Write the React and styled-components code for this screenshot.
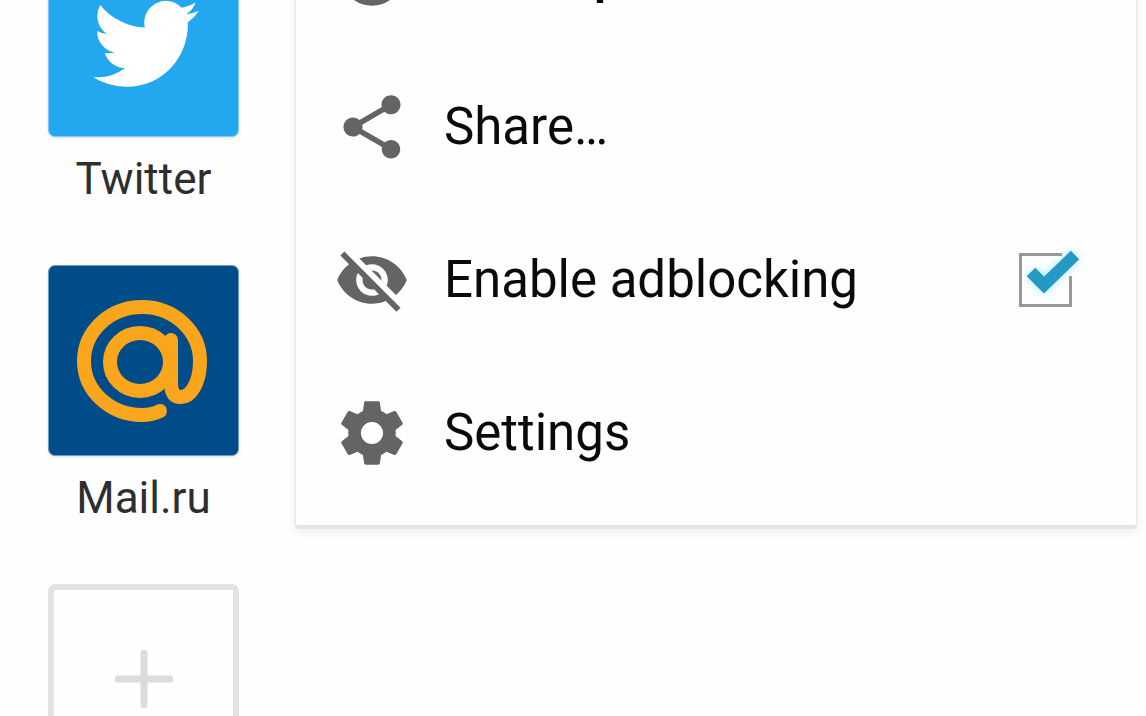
import React, { useState } from "react";
import styled, { createGlobalStyle } from "styled-components";

const GlobalStyle = createGlobalStyle`
  * {
    box-sizing: border-box;
  }

  body {
    margin: 0;
    background: #fefefe;
    font-family: Roboto, "Liberation Sans", sans-serif;
  }
`;

const Page = styled.div`
  position: relative;
  height: 100vh;
  overflow: hidden;
`;

// the list is scrolled, so its first tile starts above the window
const SpeedDial = styled.nav`
  display: flex;
  flex-direction: column;
  gap: 20px;
  width: 191px;
  margin: -54px 0 0 48px;
`;

const Dial = styled.a`
  display: flex;
  flex-direction: column;
  flex-shrink: 0;
  height: 299px;
  color: #2e2e2e;
  font-size: 44px;
  line-height: 54px;
  text-align: center;
  text-decoration: none;
`;

const Tile = styled.span`
  display: block;
  height: 191px;
  margin-bottom: 15px;
  border: 1px solid ${(props) => props.$edge};
  border-radius: 7px;
  background: ${(props) => props.$color};
  box-shadow: 0 1px 3px rgba(0, 0, 0, 0.12);

  svg {
    display: block;
  }
`;

const AddTile = styled.button`
  display: flex;
  align-items: center;
  justify-content: center;
  flex-shrink: 0;
  width: 191px;
  height: 189px;
  padding: 0;
  border: 6px solid #e2e2e2;
  border-radius: 7px;
  background: #fefefe;
  cursor: pointer;
`;

const Menu = styled.div`
  position: absolute;
  top: -105px;
  left: 294px;
  right: 8px;
  padding-bottom: 16px;
  border: 2px solid #ececec;
  border-bottom: 4px solid #e4e4e4;
  border-radius: 6px;
  background: #fefefe;
  box-shadow: 0 4px 10px rgba(0, 0, 0, 0.06);
`;

const itemStyles = `
  display: flex;
  align-items: center;
  gap: 34px;
  width: 100%;
  height: 153px;
  padding: 0 53px 0 38px;
  border: 0;
  background: none;
  color: #0a0a0a;
  font-family: inherit;
  font-size: 51px;
  line-height: 60px;
  text-align: left;
  cursor: pointer;
`;

const MenuButton = styled.button`
  ${itemStyles}
`;

const MenuLabel = styled.label`
  ${itemStyles}
`;

const Text = styled.span`
  flex: 1;
  font-size: ${(props) => (props.$strong ? "54px" : "inherit")};
  font-weight: ${(props) => (props.$strong ? 500 : 400)};
`;

const Icon = styled.svg`
  flex-shrink: 0;
  width: 76px;
  height: 76px;
  fill: #646464;
`;

const CheckWrap = styled.span`
  position: relative;
  width: 64px;
  height: 54px;
`;

const CheckInput = styled.input`
  appearance: none;
  display: block;
  width: 53px;
  height: 54px;
  margin: 0;
  border: 3px solid #989898;
  background: #fefefe;
  cursor: pointer;
`;

const Tick = styled.svg`
  position: absolute;
  top: -8px;
  left: 0;
  overflow: visible;
  pointer-events: none;

  .mark {
    filter: drop-shadow(0 0 5px rgba(110, 215, 250, 0.6));
  }
`;

const DialIcon = ({ children }) => (
  <svg width="189" height="189" viewBox="1 1 189 189" aria-hidden="true">
    {children}
  </svg>
);

const MenuIcon = ({ d }) => (
  <Icon viewBox="0 0 24 24" aria-hidden="true">
    <path d={d} />
  </Icon>
);

const icons = {
  backup:
    "M12 2C6.48 2 2 6.48 2 12s4.48 10 10 10 10-4.48 10-10S17.52 2 12 2zm0 3a7 7 0 1 1 0 14 7 7 0 0 1 0-14z",
  share:
    "M18 16.08c-.76 0-1.44.3-1.96.77L8.91 12.7c.05-.23.09-.46.09-.7s-.04-.47-.09-.7l7.05-4.11c.54.5 1.25.81 2.04.81 1.66 0 3-1.34 3-3s-1.34-3-3-3-3 1.34-3 3c0 .24.04.47.09.7L8.04 9.81C7.5 9.31 6.79 9 6 9c-1.66 0-3 1.34-3 3s1.34 3 3 3c.79 0 1.5-.31 2.04-.81l7.12 4.16c-.05.21-.08.43-.08.65 0 1.61 1.31 2.92 2.92 2.92s2.92-1.31 2.92-2.92-1.31-2.92-2.92-2.92z",
  settings:
    "M19.43 12.98c.04-.32.07-.64.07-.98s-.03-.66-.07-.98l2.11-1.65c.19-.15.24-.42.12-.64l-2-3.46c-.12-.22-.39-.3-.61-.22l-2.49 1c-.52-.4-1.08-.73-1.69-.98l-.38-2.65C14.46 2.18 14.25 2 14 2h-4c-.25 0-.46.18-.49.42l-.38 2.65c-.61.25-1.17.59-1.69.98l-2.49-1c-.23-.09-.49 0-.61.22l-2 3.46c-.13.22-.07.49.12.64l2.11 1.65c-.04.32-.07.65-.07.98s.03.66.07.98l-2.11 1.65c-.19.15-.24.42-.12.64l2 3.46c.12.22.39.3.61.22l2.49-1c.52.4 1.08.73 1.69.98l.38 2.65c.03.24.24.42.49.42h4c.25 0 .46-.18.49-.42l.38-2.65c.61-.25 1.17-.59 1.69-.98l2.49 1c.23.09.49 0 .61-.22l2-3.46c.12-.22.07-.49-.12-.64l-2.11-1.65zM12 15.5c-1.93 0-3.5-1.57-3.5-3.5s1.57-3.5 3.5-3.5 3.5 1.57 3.5 3.5-1.57 3.5-3.5 3.5z",
  hidden:
    "M12 7c2.76 0 5 2.24 5 5 0 .65-.13 1.26-.36 1.83l2.92 2.92c1.51-1.26 2.7-2.89 3.43-4.75-1.73-4.39-6-7.5-11-7.5-1.4 0-2.74.25-3.98.7l2.16 2.16C10.74 7.13 11.35 7 12 7zM2 4.27l2.28 2.28.46.46C3.08 8.3 1.78 10.02 1 12c1.73 4.39 6 7.5 11 7.5 1.55 0 3.03-.3 4.38-.84l.42.42L19.73 22 21 20.73 3.27 3 2 4.27zM7.53 9.8l1.55 1.55c-.05.21-.08.43-.08.65 0 1.66 1.34 3 3 3 .22 0 .44-.03.65-.08l1.55 1.55c-.67.33-1.41.53-2.2.53-2.76 0-5-2.24-5-5 0-.79.2-1.53.53-2.2zm4.31-.78l3.15 3.15.02-.16c0-1.66-1.34-3-3-3l-.17.01z",
};

const App = () => {
  const [adblock, setAdblock] = useState(true);

  return (
    <Page>
      <GlobalStyle />
      <SpeedDial>
        <Dial href="#twitter">
          <Tile $color="#23a8f0" $edge="#7cc9f4">
            <DialIcon>
              <path
                transform="translate(45 45) scale(4.4)"
                fill="#fff"
                d="M23.953 4.57a10 10 0 01-2.825.775 4.958 4.958 0 002.163-2.723c-.951.555-2.005.959-3.127 1.184a4.92 4.92 0 00-8.384 4.482C7.69 8.095 4.067 6.13 1.64 3.162a4.822 4.822 0 00-.666 2.475c0 1.71.87 3.213 2.188 4.096a4.904 4.904 0 01-2.228-.616v.06a4.923 4.923 0 003.946 4.827 4.996 4.996 0 01-2.212.085 4.936 4.936 0 004.604 3.417 9.867 9.867 0 01-6.102 2.105c-.39 0-.779-.023-1.17-.067a13.995 13.995 0 007.557 2.209c9.053 0 13.998-7.496 13.998-13.985 0-.21 0-.42-.015-.63A9.935 9.935 0 0024 4.59z"
              />
            </DialIcon>
          </Tile>
          Twitter
        </Dial>
        <Dial href="#mail">
          <Tile $color="#004c88" $edge="#6d9cc4">
            <DialIcon>
              <g fill="none" stroke="#faa61c" strokeLinecap="round">
                <ellipse cx="92" cy="97" rx="30" ry="29" strokeWidth="14" />
                <path
                  strokeWidth="14"
                  d="M112 146C106 149 100 150 94 150A58 54 0 0 1 36 96A58 54 0 0 1 152 96C152 119 142 132 133 132C126 132 123 127 123 117V75"
                />
              </g>
            </DialIcon>
          </Tile>
          Mail.ru
        </Dial>
        <AddTile type="button" aria-label="Add">
          <svg width="58" height="58" viewBox="0 0 58 58" aria-hidden="true">
            <path
              d="M29 3V55M3 29H55"
              stroke="#dcdcdc"
              strokeWidth="7"
              strokeLinecap="round"
            />
          </svg>
        </AddTile>
      </SpeedDial>

      <Menu>
        <MenuButton type="button">
          <MenuIcon d={icons.backup} />
          <Text $strong>Backup</Text>
        </MenuButton>
        <MenuButton type="button">
          <MenuIcon d={icons.share} />
          <Text>Share…</Text>
        </MenuButton>
        <MenuLabel htmlFor="adblock">
          <MenuIcon d={icons.hidden} />
          <Text>Enable adblocking</Text>
          <CheckWrap>
            <CheckInput
              id="adblock"
              type="checkbox"
              checked={adblock}
              onChange={() => setAdblock(!adblock)}
            />
            {adblock && (
              <Tick width="64" height="62" viewBox="0 0 64 62">
                <path d="M43 7H54V31H49V12H43Z" fill="#fefefe" />
                <path
                  className="mark"
                  d="M12 27L25 40L56 10"
                  fill="none"
                  stroke="#2499c4"
                  strokeWidth="12"
                />
              </Tick>
            )}
          </CheckWrap>
        </MenuLabel>
        <MenuButton type="button">
          <MenuIcon d={icons.settings} />
          <Text>Settings</Text>
        </MenuButton>
      </Menu>
    </Page>
  );
};

export default App;
